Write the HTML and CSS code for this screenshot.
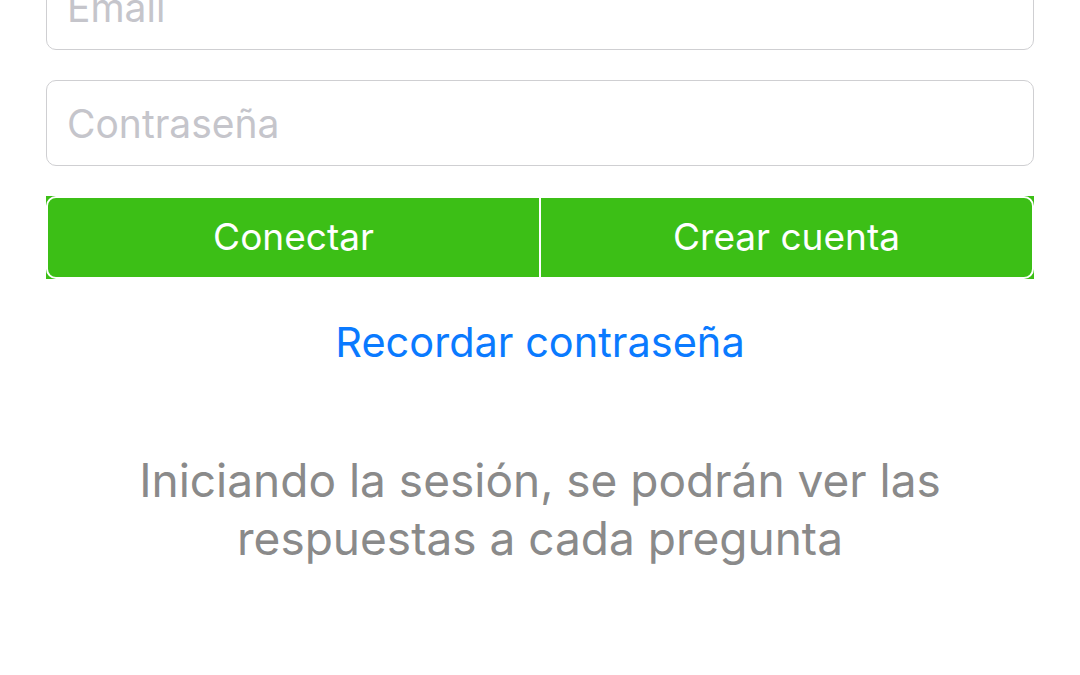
FILE: index.html
```html
<!DOCTYPE html>
<html lang="es">
<head>
<meta charset="utf-8">
<title>Conectar</title>
<link rel="stylesheet" href="styles.css">
</head>
<body>
<main class="page">
  <div class="field field-first"><span class="placeholder">Email</span></div>
  <div class="field"><span class="placeholder">Contraseña</span></div>
  <div class="segments">
    <button class="seg seg-left">Conectar</button>
    <button class="seg seg-right">Crear cuenta</button>
  </div>
  <a class="link" href="#">Recordar contraseña</a>
  <p class="note">Iniciando la sesión, se podrán ver las<br>respuestas a cada pregunta</p>
</main>
</body>
</html>
```
FILE: styles.css
```css
html, body {
  margin: 0;
  padding: 0;
  background: #ffffff;
  height: 100%;
  overflow: hidden;
}
.page {
  font-family: Inter, "Liberation Sans", sans-serif;
  padding: 0 46px;
  display: flex;
  flex-direction: column;
}
.field {
  box-sizing: border-box;
  height: 86px;
  border: 1.5px solid #cfcfd2;
  border-radius: 10px;
  display: flex;
  align-items: center;
  padding-left: 20px;
  margin-bottom: 30px;
}
.field-first {
  margin-top: -36px;
}
.placeholder {
  font-size: 39px;
  color: #c5c5cb;
}
.segments {
  display: flex;
  height: 83px;
  background: #3cbf16;
}
.seg {
  flex: 1;
  box-sizing: border-box;
  background: #3cbf16;
  border: 2px solid #ffffff;
  color: #ffffff;
  font-family: inherit;
  font-size: 37px;
  padding: 0 0 2px;
}
.seg-left {
  border-radius: 10px 0 0 10px;
  border-right-width: 1px;
}
.seg-right {
  border-radius: 0 10px 10px 0;
  border-left-width: 1px;
}
.link {
  align-self: center;
  margin-top: 38px;
  font-size: 41.5px;
  color: #0a7aff;
  text-decoration: none;
}
.note {
  margin: 84px 0 0;
  text-align: center;
  font-size: 46px;
  line-height: 58px;
  color: #8a8a8a;
}
```
